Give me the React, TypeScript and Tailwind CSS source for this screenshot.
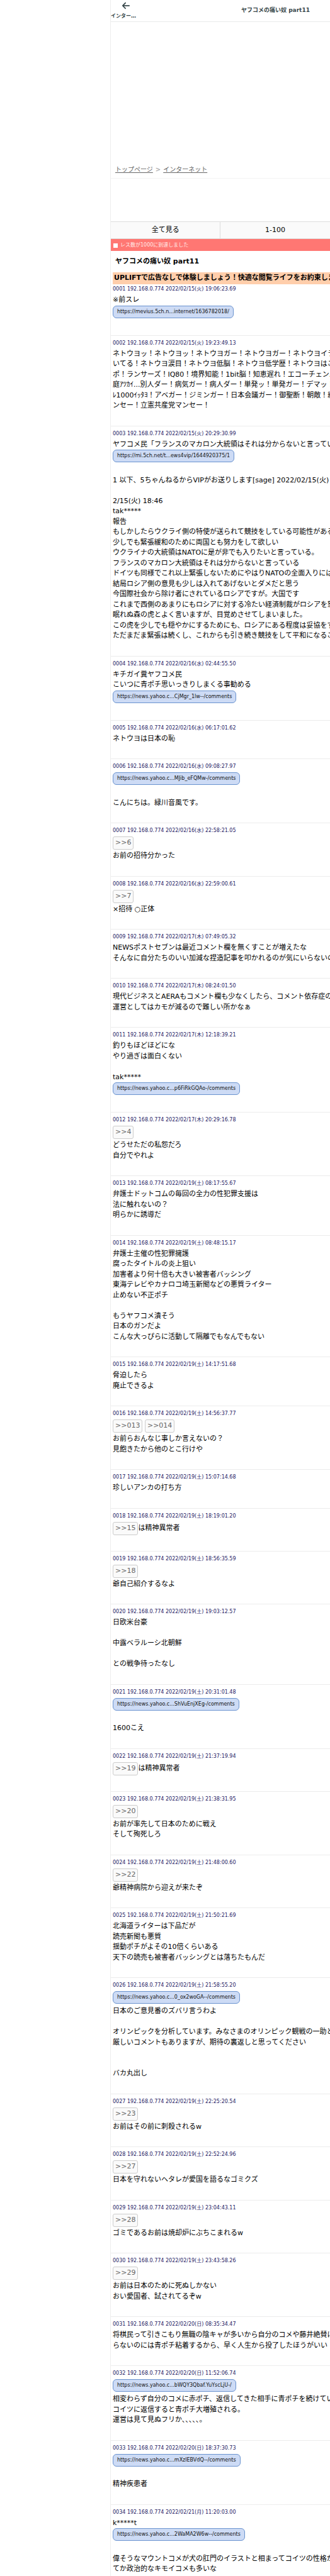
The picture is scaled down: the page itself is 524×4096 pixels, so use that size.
import { Fragment } from "react";
import { FaArrowLeft } from "react-icons/fa6";

type Post = {
  no: string;
  date: string;
  lines: string[];
};

const NAME = "192.168.0.774";

const posts: Post[] = [
  {
    no: "0001",
    date: "2022/02/15(火) 19:06:23.69",
    lines: ["※前スレ", "https://mevius.5ch.n...internet/1636782018/"],
  },
  {
    no: "0002",
    date: "2022/02/15(火) 19:23:49.13",
    lines: [
      "ネトウヨッ！ネトウヨッ！ネトウヨガー！ネトウヨガー！ネトウヨイラ",
      "いてる！ネトウヨ涙目！ネトウヨ低脳！ネトウヨ低学歴！ネトウヨはこ",
      "ポ！ランサーズ！IQ80！境界知能！1bit脳！知恵遅れ！エコーチェンバ",
      "庭ｱﾂｶｲ...別人ダー！病気ガー！病人ダー！単発ッ！単発ガー！デマッ！",
      "ﾚ1000ｲｯﾀﾖ！アベガー！ジミンガー！日本会議ガー！御聖断！朝敵！統",
      "ンセー！立憲共産党マンセー！",
    ],
  },
  {
    no: "0003",
    date: "2022/02/15(火) 20:29:30.99",
    lines: [
      "ヤフコメ民「フランスのマカロン大統領はそれは分からないと言ってい",
      "https://mi.5ch.net/t...ews4vip/1644920375/1",
      "",
      "1 以下、5ちゃんねるからVIPがお送りします[sage] 2022/02/15(火)",
      "",
      "2/15(火) 18:46",
      "tak*****",
      "報告",
      "もしかしたらウクライ側の特使が送られて競技をしている可能性がある",
      "少しでも緊張緩和のために両国とも努力をして欲しい",
      "ウクライナの大統領はNATOに是が非でも入りたいと言っている。",
      "フランスのマカロン大統領はそれは分からないと言っている",
      "ドイツも同様でこれ以上緊張しないためにやはりNATOの全面入りには",
      "結局ロシア側の意見も少しは入れてあげないとダメだと思う",
      "今国際社会から除け者にされているロシアですが。大国です",
      "これまで西側のあまりにもロシアに対する冷たい経済制裁がロシアを怒",
      "眠れぬ森の虎とよく言いますが、目覚めさせてしまいました。",
      "この虎を少しでも穏やかにするためにも、ロシアにある程度は妥協をす",
      "ただまだま緊張は続くし、これからも引き続き競技をして平和になるこ",
    ],
  },
  {
    no: "0004",
    date: "2022/02/16(水) 02:44:55.50",
    lines: [
      "キチガイ糞ヤフコメ民",
      "こいつに青ポチ思いっきりしまくる事勧める",
      "https://news.yahoo.c...CjMgr_1lw--/comments",
    ],
  },
  {
    no: "0005",
    date: "2022/02/16(水) 06:17:01.62",
    lines: ["ネトウヨは日本の恥"],
  },
  {
    no: "0006",
    date: "2022/02/16(水) 09:08:27.97",
    lines: [
      "https://news.yahoo.c...MJib_eFQMw-/comments",
      "",
      "こんにちは。緑川音風です。",
    ],
  },
  {
    no: "0007",
    date: "2022/02/16(水) 22:58:21.05",
    lines: [">>6", "お前の招待分かった"],
  },
  {
    no: "0008",
    date: "2022/02/16(水) 22:59:00.61",
    lines: [">>7", "×招待 ○正体"],
  },
  {
    no: "0009",
    date: "2022/02/17(木) 07:49:05.32",
    lines: [
      "NEWSポストセブンは最近コメント欄を無くすことが増えたな",
      "そんなに自分たちのいい加減な捏造記事を叩かれるのが気にいらないの",
    ],
  },
  {
    no: "0010",
    date: "2022/02/17(木) 08:24:01.50",
    lines: [
      "現代ビジネスとAERAもコメント欄も少なくしたら、コメント依存症の",
      "運営としてはカモが減るので難しい所かなぁ",
    ],
  },
  {
    no: "0011",
    date: "2022/02/17(木) 12:18:39.21",
    lines: [
      "釣りもほどほどにな",
      "やり過ぎは面白くない",
      "",
      "tak*****",
      "https://news.yahoo.c...p6FiRkGQAo-/comments",
    ],
  },
  {
    no: "0012",
    date: "2022/02/17(木) 20:29:16.78",
    lines: [">>4", "どうせただの私怨だろ", "自分でやれよ"],
  },
  {
    no: "0013",
    date: "2022/02/19(土) 08:17:55.67",
    lines: [
      "弁護士ドットコムの毎回の全力の性犯罪支援は",
      "法に触れないの？",
      "明らかに誘導だ",
    ],
  },
  {
    no: "0014",
    date: "2022/02/19(土) 08:48:15.17",
    lines: [
      "弁護士主催の性犯罪擁護",
      "腐ったタイトルの炎上狙い",
      "加害者より何十倍も大きい被害者バッシング",
      "東海テレビやカナロコ埼玉新聞などの悪質ライター",
      "止めない不正ポチ",
      "",
      "もうヤフコメ潰そう",
      "日本のガンだよ",
      "こんな大っぴらに活動して隔離でもなんでもない",
    ],
  },
  {
    no: "0015",
    date: "2022/02/19(土) 14:17:51.68",
    lines: ["脅迫したら", "廃止できるよ"],
  },
  {
    no: "0016",
    date: "2022/02/19(土) 14:56:37.77",
    lines: [
      ">>013 >>014",
      "お前らおんなじ事しか言えないの？",
      "見飽きたから他のとこ行けや",
    ],
  },
  {
    no: "0017",
    date: "2022/02/19(土) 15:07:14.68",
    lines: ["珍しいアンカの打ち方"],
  },
  {
    no: "0018",
    date: "2022/02/19(土) 18:19:01.20",
    lines: [">>15は精神異常者"],
  },
  {
    no: "0019",
    date: "2022/02/19(土) 18:56:35.59",
    lines: [">>18", "爺自己紹介するなよ"],
  },
  {
    no: "0020",
    date: "2022/02/19(土) 19:03:12.57",
    lines: ["日欧米台豪", "", "中露ベラルーシ北朝鮮", "", "との戦争待ったなし"],
  },
  {
    no: "0021",
    date: "2022/02/19(土) 20:31:01.48",
    lines: ["https://news.yahoo.c...ShVuEnjXEg-/comments", "", "1600こえ"],
  },
  {
    no: "0022",
    date: "2022/02/19(土) 21:37:19.94",
    lines: [">>19は精神異常者"],
  },
  {
    no: "0023",
    date: "2022/02/19(土) 21:38:31.95",
    lines: [">>20", "お前が率先して日本のために戦え", "そして殉死しろ"],
  },
  {
    no: "0024",
    date: "2022/02/19(土) 21:48:00.60",
    lines: [">>22", "爺精神病院から迎えが来たぞ"],
  },
  {
    no: "0025",
    date: "2022/02/19(土) 21:50:21.69",
    lines: [
      "北海道ライターは下品だが",
      "読売新聞も悪質",
      "揺動ポチがよその10倍くらいある",
      "天下の読売も被害者バッシングとは落ちたもんだ",
    ],
  },
  {
    no: "0026",
    date: "2022/02/19(土) 21:58:55.20",
    lines: [
      "https://news.yahoo.c...0_ox2woGA--/comments",
      "日本のご意見番のズバリ言うわよ",
      "",
      "オリンピックを分析しています。みなさまのオリンピック観戦の一助と",
      "厳しいコメントもありますが、期待の裏返しと思ってください",
      "",
      "",
      "バカ丸出し",
    ],
  },
  {
    no: "0027",
    date: "2022/02/19(土) 22:25:20.54",
    lines: [">>23", "お前はその前に刺殺されるw"],
  },
  {
    no: "0028",
    date: "2022/02/19(土) 22:52:24.96",
    lines: [">>27", "日本を守れないヘタレが愛国を語るなゴミクズ"],
  },
  {
    no: "0029",
    date: "2022/02/19(土) 23:04:43.11",
    lines: [">>28", "ゴミであるお前は焼却炉にぶちこまれるw"],
  },
  {
    no: "0030",
    date: "2022/02/19(土) 23:43:58.26",
    lines: [
      ">>29",
      "お前は日本のために死ぬしかない",
      "おい愛国者、試されてるぞw",
    ],
  },
  {
    no: "0031",
    date: "2022/02/20(日) 08:35:34.47",
    lines: [
      "将棋民って引きこもり無職の陰キャが多いから自分のコメや藤井絶賛に",
      "らないのには青ポチ粘着するから、早く人生から投了したほうがいい",
    ],
  },
  {
    no: "0032",
    date: "2022/02/20(日) 11:52:06.74",
    lines: [
      "https://news.yahoo.c...bWQY3Qbaf.YuYscLjU-/",
      "相変わらず自分のコメに赤ポチ、返信してきた相手に青ポチを続けてい",
      "コイツに返信すると青ポチ大増殖される。",
      "運営は見て見ぬフリか､､､､､。",
    ],
  },
  {
    no: "0033",
    date: "2022/02/20(日) 18:37:30.73",
    lines: ["https://news.yahoo.c...mXzlEBVdQ--/comments", "", "精神疾患者"],
  },
  {
    no: "0034",
    date: "2022/02/21(月) 11:20:03.00",
    lines: [
      "k*****t",
      "https://news.yahoo.c...2WaMA2W6w--/comments",
      "",
      "偉そうなマウントコメが犬の肛門のイラストと相まってコイツの性格か",
      "てか政治的なキモイコメも多いな",
    ],
  },
];

const Line = ({ text }: { text: string }) => {
  if (text.startsWith("https://")) {
    return (
      <div className="flex h-6 items-start">
        <a
          href="#"
          className="flex h-5 items-center rounded-md border border-[#6a93cf] bg-[#cddbf5] px-1.5 text-[8px] text-[#111]"
        >
          {text}
        </a>
      </div>
    );
  }

  if (text.startsWith(">>")) {
    return (
      <div className="flex h-[23px] items-center pb-0.5">
        {text.split(/(>>\d+)/).map((part, i) =>
          part.startsWith(">>") ? (
            <a
              key={i}
              href="#"
              className="flex h-[21px] items-center rounded-[3px] border border-[#ccc] bg-[#fafafa] px-[3px] text-[#666]"
            >
              {part}
            </a>
          ) : (
            <span key={i} className="whitespace-pre">
              {part}
            </span>
          ),
        )}
      </div>
    );
  }

  return <p>{text || <br />}</p>;
};

const Article = ({ post }: { post: Post }) => (
  <article className="border-b border-[#ececec] px-[3px] pt-1.5 pb-[23px] first:pt-0.5 last:border-b-0 last:pb-0.5">
    <h2 className="mb-[3px] text-[8px] leading-3 text-[#1c1763]">
      {post.no} {NAME} {post.date}
    </h2>
    {post.lines.map((line, i) => (
      <Fragment key={i}>
        <Line text={line} />
      </Fragment>
    ))}
  </article>
);

const App: React.FC = () => {
  return (
    <div
      lang="ja"
      className="min-h-screen overflow-hidden bg-white pl-[175px] font-['DejaVu_Sans','Noto_Sans_CJK_JP',sans-serif] text-[11px] leading-normal whitespace-nowrap text-black"
    >
      {/* The thread column is as wide as the window and runs off its right side */}
      <div className="min-h-screen w-[calc(100%+175px)] border-l border-[#eee]">
        <header className="flex h-[35px] items-center border-b border-[#e8eaea] font-bold text-[#37474a]">
          <a href="#" className="flex w-[41px] flex-col items-center">
            <FaArrowLeft className="ml-1.5 size-3.5" />
            <span className="mt-1 w-full text-[8px] leading-3">インター…</span>
          </a>
          <h1 className="flex-1 text-center text-[9px]">
            ヤフコメの痛い奴 part11
          </h1>
          <div className="w-[41px]" />
        </header>

        <nav className="flex items-center border-b border-[#f3f3f3] px-[7px] pt-[227px] pb-[5px] text-[10px] leading-4 text-[#666]">
          <a href="#" className="underline">
            トップページ
          </a>
          <span className="mx-1 text-[#999]">&gt;</span>
          <a href="#" className="underline">
            インターネット
          </a>
        </nav>

        <nav className="mt-[68px] grid h-7 grid-cols-3 border-y border-[#ddd] bg-[#fafafa]">
          <a
            href="#"
            className="flex items-center justify-center border-r border-[#ddd]"
          >
            全て見る
          </a>
          <a
            href="#"
            className="flex items-center justify-center border-r border-[#ddd]"
          >
            1-100
          </a>
        </nav>

        <div className="flex h-[19px] items-center gap-1 bg-[#ff7773] px-1 text-[8px] text-[#ffe9e8]">
          <span className="mt-0.5 size-[7px] bg-white" />
          レス数が1000に到達しました
        </div>

        <h1 className="flex h-[34px] items-center px-[7px] font-bold">
          ヤフコメの痛い奴 part11
        </h1>

        <a
          href="#"
          className="mx-[3px] flex h-[19px] items-center bg-[#ffceab] px-0.5 font-bold"
        >
          UPLIFTで広告なしで体験しましょう！快適な閲覧ライフをお約束しま
        </a>

        <main>
          {posts.map((post) => (
            <Article key={post.no} post={post} />
          ))}
        </main>
      </div>
    </div>
  );
};

export default App;
